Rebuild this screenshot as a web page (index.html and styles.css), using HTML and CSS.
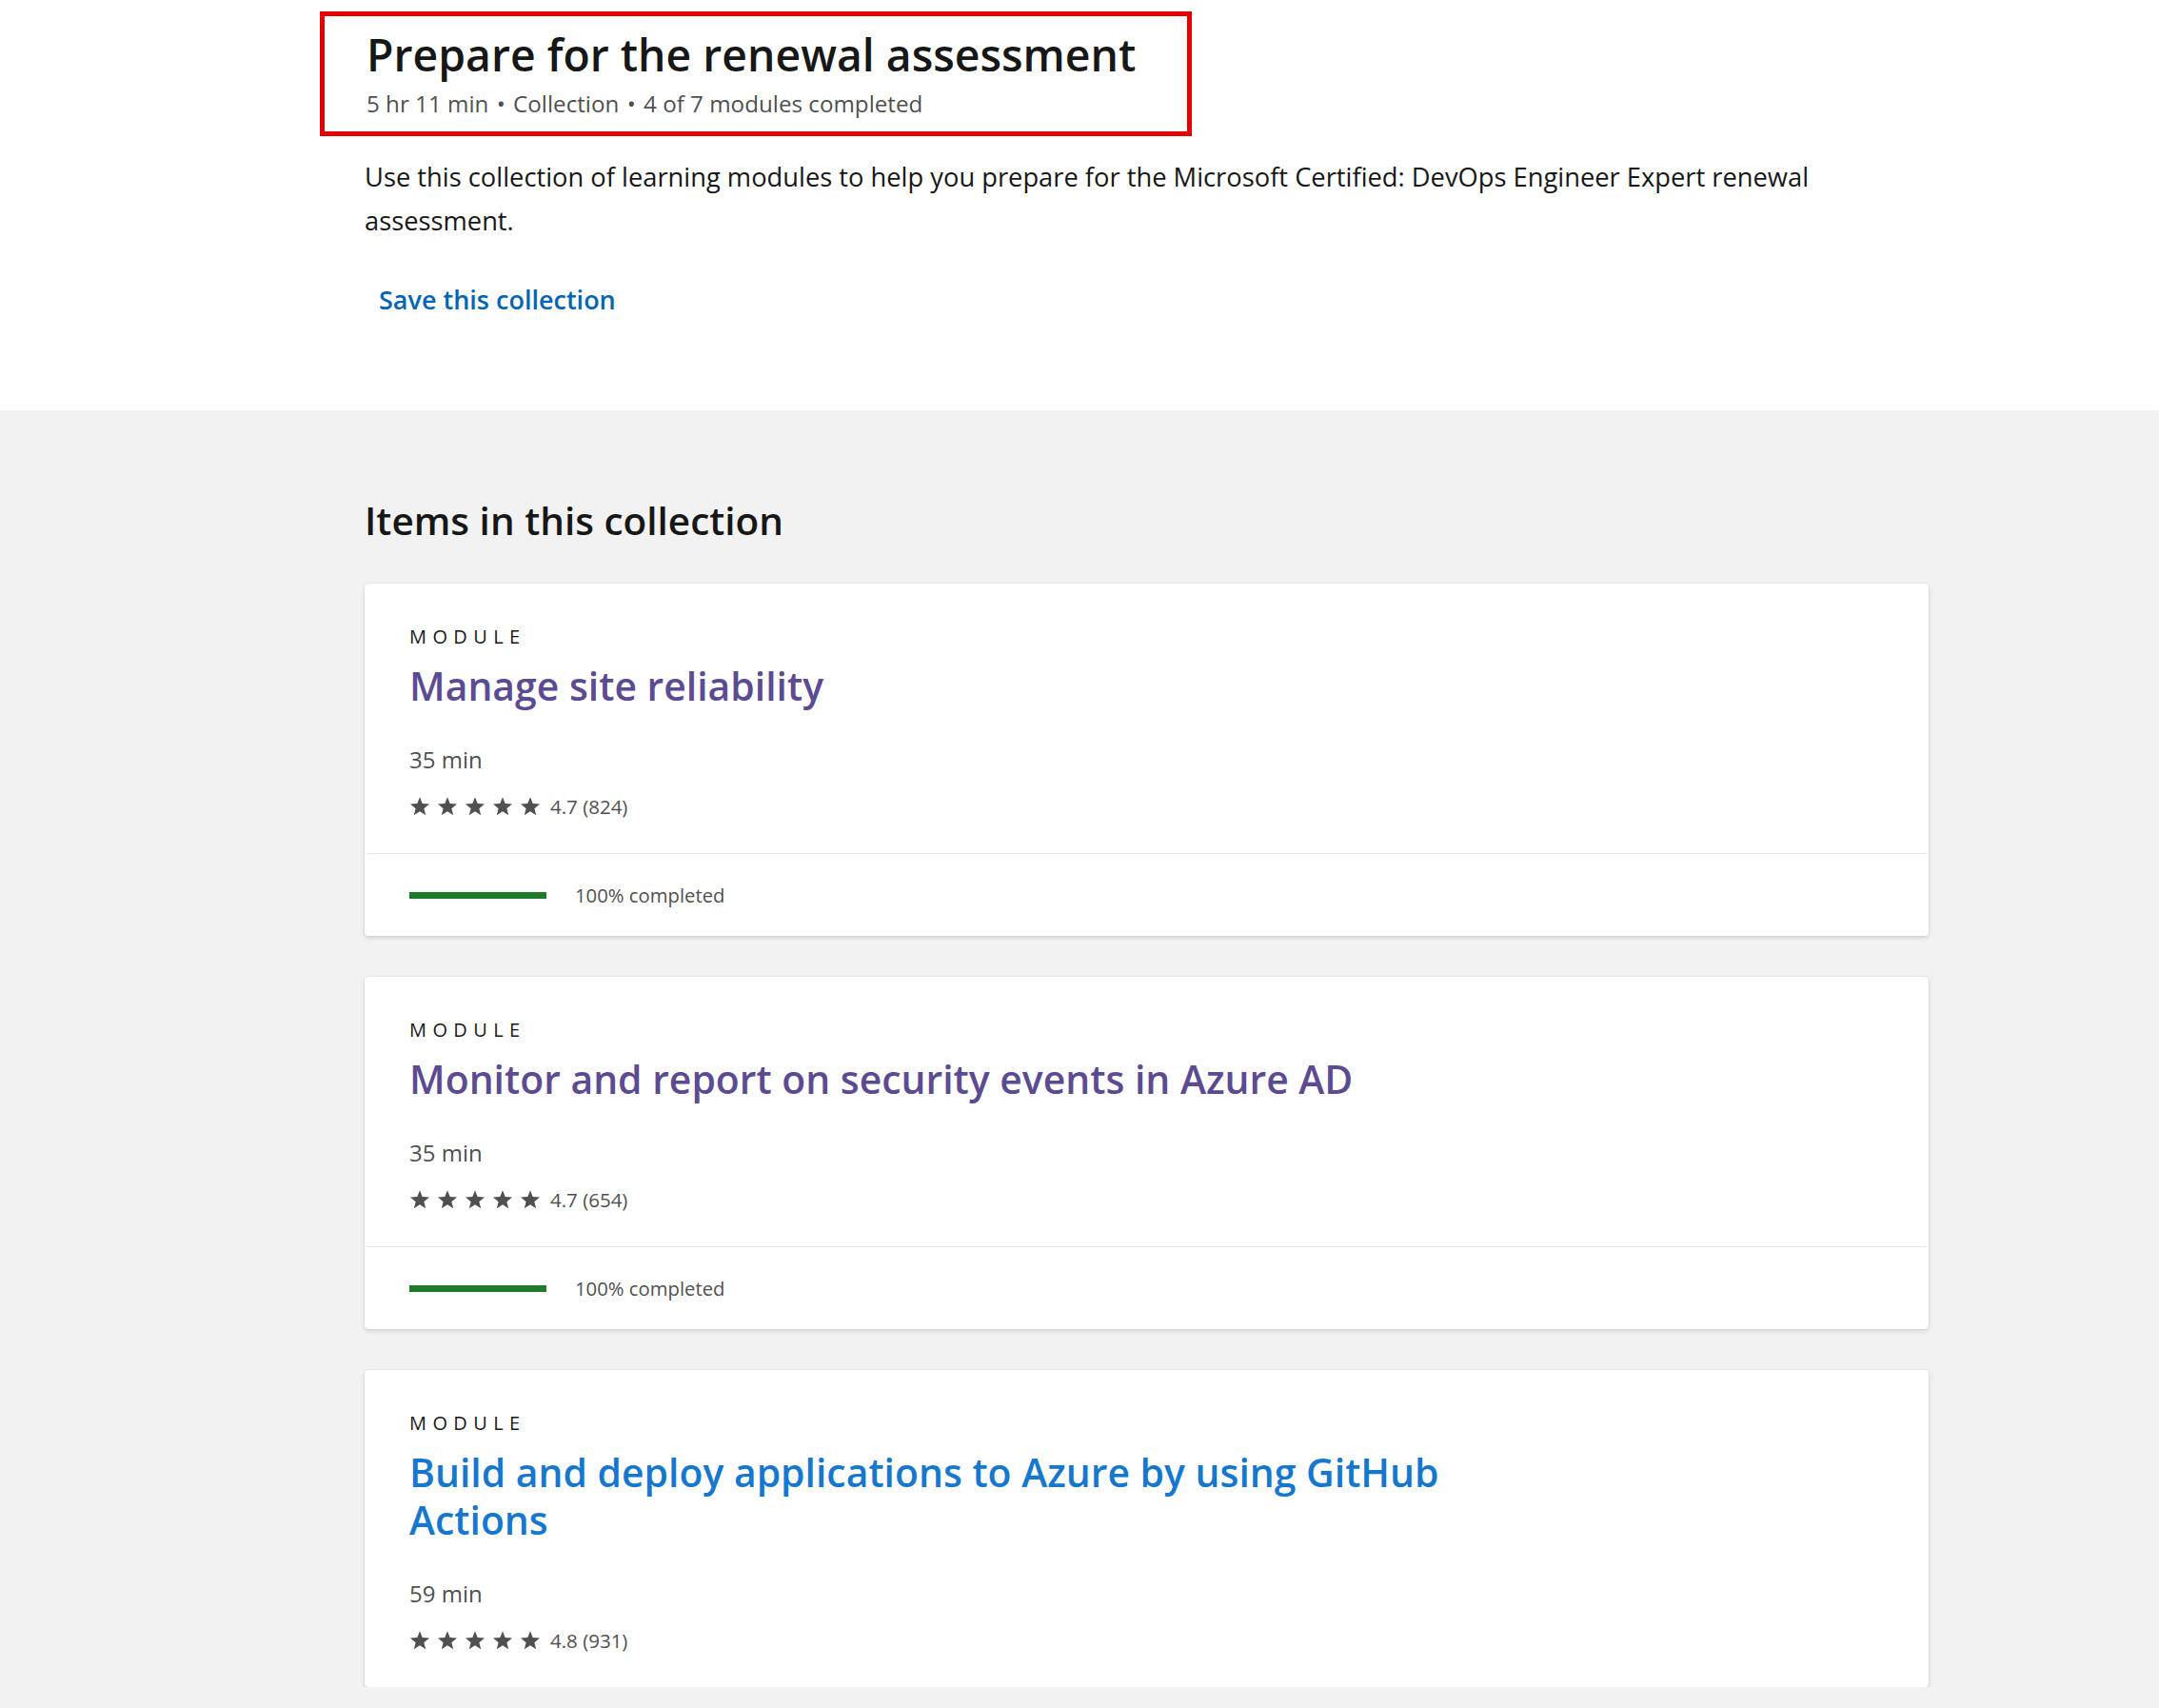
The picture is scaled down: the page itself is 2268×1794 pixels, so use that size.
FILE: index.html
```html
<!DOCTYPE html>
<html lang="en">
<head>
<meta charset="utf-8">
<title>Prepare for the renewal assessment</title>
<link rel="stylesheet" href="styles.css">
</head>
<body>
<svg width="0" height="0" class="defs" aria-hidden="true">
  <defs>
    <symbol id="star" viewBox="0 0 24 24">
      <path d="M12 1.3L14.94 8.75L22.94 9.25L16.76 14.35L18.76 22.1L12 17.8L5.24 22.1L7.24 14.35L1.06 9.25L9.06 8.75Z"/>
    </symbol>
  </defs>
</svg>
<header class="hero">
  <div class="column">
    <div class="title-box">
      <h1 class="page-title">Prepare for the renewal assessment</h1>
      <div class="meta">5 hr 11 min <span class="dot">•</span> Collection <span class="dot">•</span> 4 of 7 modules completed</div>
    </div>
    <p class="description">Use this collection of learning modules to help you prepare for the Microsoft Certified: DevOps Engineer Expert renewal assessment.</p>
    <button class="save-btn" type="button">Save this collection</button>
  </div>
</header>
<main class="items">
  <div class="column">
    <h2 class="items-heading">Items in this collection</h2>
    <ul class="card-list">
      <li class="card">
        <div class="card-body">
          <div class="card-type">MODULE</div>
          <a class="card-title visited" href="#">Manage site reliability</a>
          <div class="duration">35 min</div>
          <div class="rating">
            <span class="stars"><svg class="star"><use href="#star"/></svg><svg class="star"><use href="#star"/></svg><svg class="star"><use href="#star"/></svg><svg class="star"><use href="#star"/></svg><svg class="star"><use href="#star"/></svg></span>
            <span class="rating-text">4.7 (824)</span>
          </div>
        </div>
        <div class="card-footer">
          <div class="progress"><div class="progress-fill" style="width:100%"></div></div>
          <span class="progress-text">100% completed</span>
        </div>
      </li>
      <li class="card">
        <div class="card-body">
          <div class="card-type">MODULE</div>
          <a class="card-title visited" href="#">Monitor and report on security events in Azure AD</a>
          <div class="duration">35 min</div>
          <div class="rating">
            <span class="stars"><svg class="star"><use href="#star"/></svg><svg class="star"><use href="#star"/></svg><svg class="star"><use href="#star"/></svg><svg class="star"><use href="#star"/></svg><svg class="star"><use href="#star"/></svg></span>
            <span class="rating-text">4.7 (654)</span>
          </div>
        </div>
        <div class="card-footer">
          <div class="progress"><div class="progress-fill" style="width:100%"></div></div>
          <span class="progress-text">100% completed</span>
        </div>
      </li>
      <li class="card">
        <div class="card-body">
          <div class="card-type">MODULE</div>
          <a class="card-title" href="#">Build and deploy applications to Azure by using GitHub Actions</a>
          <div class="duration">59 min</div>
          <div class="rating">
            <span class="stars"><svg class="star"><use href="#star"/></svg><svg class="star"><use href="#star"/></svg><svg class="star"><use href="#star"/></svg><svg class="star"><use href="#star"/></svg><svg class="star"><use href="#star"/></svg></span>
            <span class="rating-text">4.8 (931)</span>
          </div>
        </div>
      </li>
    </ul>
  </div>
</main>
</body>
</html>
```

FILE: styles.css
```css
* { box-sizing: border-box; }

html, body {
  margin: 0;
  padding: 0;
}

body {
  font-family: "Open Sans", "Noto Sans", "Liberation Sans", sans-serif;
  color: #171717;
  background: #f2f2f2;
  overflow: hidden;
}

.defs {
  position: absolute;
  width: 0;
  height: 0;
}

.column {
  margin-left: 383px;
  width: 1643px;
}

/* ---------- hero ---------- */
.hero {
  background: #ffffff;
  height: 431px;
  padding-top: 12px;
}

.title-box {
  width: 916px;
  margin-left: -47px;
  border: 5px solid #e50000;
  padding: 12px 0 13px 44px;
}

.page-title {
  margin: 0;
  font-size: 46.35px;
  line-height: 56px;
  font-weight: 600;
  color: #171717;
}

.meta {
  margin-top: 8px;
  font-size: 24.2px;
  line-height: 32px;
  color: #505050;
}

.meta .dot {
  margin: 0 2px;
}

.description {
  margin: 20px 0 0 0;
  max-width: 1580px;
  font-size: 27.3px;
  line-height: 46px;
  color: #171717;
}

.save-btn {
  display: block;
  margin-top: 43px;
  padding: 0 15px;
  border: 0;
  background: transparent;
  font-family: inherit;
  font-size: 27px;
  line-height: 34px;
  font-weight: 600;
  color: #0065b3;
  cursor: pointer;
}

/* ---------- items ---------- */
.items {
  padding-top: 91px;
}

.items-heading {
  margin: 0;
  font-size: 40.5px;
  line-height: 50px;
  font-weight: 600;
  color: #171717;
}

.card-list {
  list-style: none;
  margin: 41px 0 0 0;
  padding: 0;
  display: flex;
  flex-direction: column;
  gap: 43px;
}

.card {
  background: #ffffff;
  border-radius: 4px;
  box-shadow: 0 2px 5px rgba(0, 0, 0, 0.14), 0 0 1.5px rgba(0, 0, 0, 0.11);
}

.card-body {
  padding: 42px 47px 35px 47px;
  display: flex;
  flex-direction: column;
  align-items: flex-start;
}

.card-type {
  font-size: 20px;
  line-height: 28px;
  letter-spacing: 6.4px;
  color: #171717;
}

.card-title {
  margin-top: 12px;
  max-width: 1150px;
  font-size: 40.9px;
  line-height: 50px;
  font-weight: 600;
  color: #1677cf;
  text-decoration: none;
}

.card-title.visited {
  color: #5c4b92;
}

.duration {
  margin-top: 37px;
  font-size: 24px;
  line-height: 32px;
  color: #505050;
}

.rating {
  margin-top: 19px;
  height: 28px;
  display: flex;
  align-items: center;
  gap: 10px;
}

.stars {
  display: flex;
  gap: 7px;
}

.star {
  width: 22px;
  height: 22px;
  fill: #505050;
}

.rating-text {
  font-size: 20.5px;
  line-height: 28px;
  color: #505050;
}

.card-footer {
  border-top: 1px solid #e6e6e6;
  margin: 0 2px;
  height: 87px;
  padding: 0 45px;
  display: flex;
  align-items: center;
  gap: 30px;
}

.progress {
  width: 144px;
  height: 7px;
  background: #e6e6e6;
}

.progress-fill {
  height: 100%;
  background: #1e7b27;
}

.progress-text {
  font-size: 20.3px;
  line-height: 28px;
  color: #505050;
}
```
